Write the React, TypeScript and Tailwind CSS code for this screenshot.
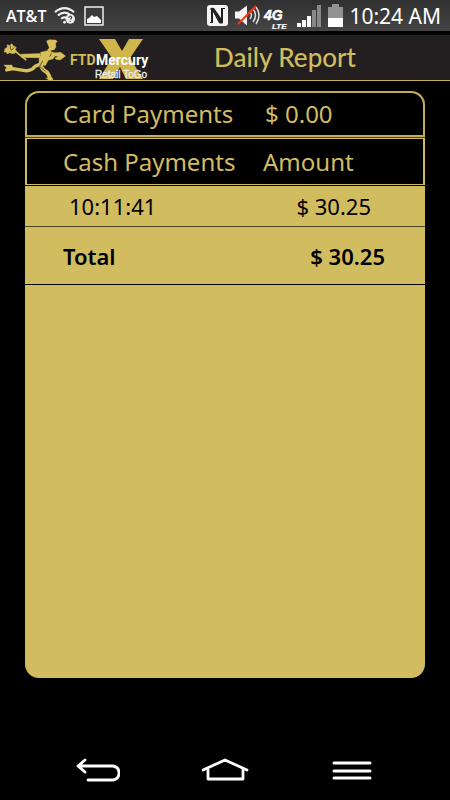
export default function App() {
  return (
    <div className="flex min-h-screen flex-col bg-black font-['Noto_Sans',sans-serif]">
      <StatusBar />
      <header className="mt-[3px] flex h-[46px] items-center border-b border-[#c9b04f] bg-[#231f20]">
        <div className="flex-1">
          <Logo />
        </div>
        <h1 className="mr-[94px] pb-[2px] font-['Lato',sans-serif] text-[26px] leading-8 font-medium text-[#d0bc5e]">Daily Report</h1>
      </header>
      <main className="mx-[25px] mt-[10px] mb-[64px] flex flex-1 flex-col overflow-hidden rounded-[14px] bg-[#d1bc60] text-[22px]">
        <div className="bg-[#4b4526] pb-px">
          <dl className="flex h-[46px] items-center rounded-t-[14px] border-2 border-[#c3ae55] bg-black text-[24px] whitespace-nowrap text-[#d1bc60]">
            <dt className="w-[238px] pl-9">Card Payments</dt>
            <dd>$ 0.00</dd>
          </dl>
        </div>
        <table className="w-full table-fixed border-separate border-spacing-0 text-left">
          <thead className="bg-black text-[24px] text-[#d1bc60]">
            <tr className="h-[47px]">
              <th className="w-[238px] border-y border-l-2 border-[#d1bc60] py-0 pr-0 pl-9 font-normal">Cash Payments</th>
              <th className="border-y border-r-2 border-[#d1bc60] p-0 font-normal">Amount</th>
            </tr>
          </thead>
          <tbody className="text-black">
            <tr className="h-[42px]">
              <td className="border-t border-b border-t-black border-b-[#4b4526] pl-11">10:11:41</td>
              <td className="border-t border-b border-t-black border-b-[#4b4526] pr-[54px] text-right">$ 30.25</td>
            </tr>
            <tr className="h-[58px] font-semibold">
              <td className="border-b border-black pt-[2px] pl-[38px]">Total</td>
              <td className="border-b border-black pt-[2px] pr-10 text-right">$ 30.25</td>
            </tr>
          </tbody>
        </table>
      </main>
      <NavBar />
    </div>
  );
}

function StatusBar() {
  return (
    <div className="flex h-8 items-center justify-between border-b border-black bg-gradient-to-b from-[#303030] to-[#454545] pr-[9px] pl-[6px] text-white">
      <div className="flex items-center gap-2">
        <span className="font-['Open_Sans',sans-serif] text-[16px] font-semibold">AT&amp;T</span>
        <svg width="22" height="20" viewBox="0 0 23 20" fill="none" stroke="#eee" strokeWidth="2.2" aria-label="Wi-Fi">
          <path d="M1 6 Q11 -2.500 21 6M4 9.500 Q11 3.500 18 9.500M7.500 13 Q10 10.500 13 12" />
          <circle cx="11" cy="16.500" r="1.500" fill="#eee" stroke="none" />
          <circle cx="17" cy="13" r="5" fill="#eee" stroke="none" />
          <path d="M15.500 12q0-2 1.500-2t1.500 1.500q0 1-1.500 2M17 15v1" stroke="#444" strokeWidth="1.300" />
        </svg>
        <svg width="20" height="20" viewBox="0 0 20 20" aria-label="Screenshot saved">
          <rect x="1" y="1" width="18" height="18" fill="#3a3a3a" stroke="#eee" strokeWidth="1.500" />
          <path d="M3 17v-4l2-1 3-3 2 2 3-1 4 4v3z" fill="#fff" />
        </svg>
      </div>
      <div className="flex items-center">
        <svg width="144" height="28" viewBox="0 0 144 28" aria-label="NFC, muted, 4G LTE, signal, battery">
          <rect x="2" y="3" width="21" height="21" rx="3" fill="#f5f5f5" />
          <path d="M5 7 Q6 5 9 6L16 16V6h4v1h-2v14q-2 1-4 0L8 10v11H5v-1h1V8z" fill="#222" />
          <path d="M30 9.500h4l8-6v20l-8-7h-4z" fill="#f5f5f5" />
          <path d="M45 10q3 3 0 7M48 7q5 6 0 13M51 5q6 8 0 17" stroke="#ddd" strokeWidth="1.500" fill="none" />
          <path d="M33 22L51 4" stroke="#f13a22" strokeWidth="2" />
          <g fill="#fff" stroke="#fff" fontFamily="'Liberation Sans', sans-serif" fontWeight="bold" fontStyle="italic">
            <text x="59" y="18" fontSize="14" strokeWidth="0.500">4G</text>
            <text x="67" y="27" fontSize="8" strokeWidth="0.200">LTE</text>
          </g>
          <path d="M92 21h4v4h-4zM97 18h4v7h-4zM102 14h4v11h-4z" fill="#fff" />
          <path d="M107 8h4v17h-4zM112 3h4v22h-4z" fill="#888" />
          <path d="M123 5h4V2h7v3h4v20h-15z" fill="#929292" />
          <path d="M123 16h15v9h-15z" fill="#fff" />
        </svg>
        <time className="text-[21px] leading-7">10:24 AM</time>
      </div>
    </div>
  );
}

function Logo() {
  return (
    <svg width="170" height="44" viewBox="0 0 170 44" role="img" aria-label="FTD Mercury Retail ToGo">
      <path d="M99 3h16l7 12 7-12h14l-13 19 13 21h-17l-6-12-7 12H99l13-21z" fill="#cfb54a" />
      <g transform="scale(0.333) translate(0 -5)" fill="#d8bf58" stroke="#d8bf58" strokeLinecap="round" strokeLinejoin="round">
        <path d="M140 20l8-4 20 1 4 5-5 4 1 12-5 8-9 2-4 5-8-5 6-8-5-12z" />
        <path d="M122 54l20-5 22 6 18-1 15 11-16 12-14-2-1-5 10-3-10-2-7 9-14 4-9 16-18-4-1-16 6-10z" />
        <path d="M64 60l57-2v12l-55-1z" strokeWidth="2" />
        <path d="M50 54L77 76" strokeWidth="5" fill="none" />
        <path d="M14 44l8-6-1-7 8 2 7-5 5 7 8 4-3 7 5 5-6 6-9 1-6-3-9 4-2-6-7 1 2-6z" />
        <path d="M120 90Q104 94 98 104Q86 112 70 108L38 103L20 107" strokeWidth="10" fill="none" />
        <path d="M12 92l24 0 4 12-12 5z" />
        <path d="M122 88Q124 106 141 114Q148 122 151 135" strokeWidth="12" fill="none" />
        <path d="M138 131l20 0 0 7-10 0z" />
        <path d="M30 34l3 12M42 40l-7 8M128 80l-9 16 16 14M154 58l-4 8" stroke="#231f20" fill="none" strokeWidth="2" />
      </g>
      <g fontFamily="Roboto, sans-serif" fontWeight="bold" fontSize="14">
        <text x="70" y="29" fill="#d5bc54">FTD</text>
        <text x="96" y="29" fill="#fff">Mercury</text>
      </g>
      <text x="95" y="42" fill="#eee" stroke="#eee" strokeWidth="0.300" fontFamily="'Liberation Sans', sans-serif" fontSize="10">Retail ToGo</text>
    </svg>
  );
}

function NavBar() {
  return (
    <nav className="flex h-[58px] items-center justify-between px-[76px]">
      <button aria-label="Back">
        <svg width="44" height="26" viewBox="0 0 44 26" fill="none" stroke="#fff" strokeWidth="2.800" strokeLinecap="round" strokeLinejoin="round">
          <path d="M9 2L2 8l7 6M3 8h34q6 1 6 7t-6 7H12" />
        </svg>
      </button>
      <button aria-label="Home">
        <svg width="48" height="26" viewBox="0 0 48 26" fill="none" stroke="#fff" strokeWidth="2.800" strokeLinecap="round" strokeLinejoin="round">
          <path d="M1 12L23 2l22 10M6 12v9h35V12" />
        </svg>
      </button>
      <button aria-label="Menu">
        <svg width="42" height="26" viewBox="0 0 42 26" stroke="#fff" strokeWidth="3" strokeLinecap="round">
          <path d="M2 5h36M2 13h36M2 20h36" />
        </svg>
      </button>
    </nav>
  );
}
